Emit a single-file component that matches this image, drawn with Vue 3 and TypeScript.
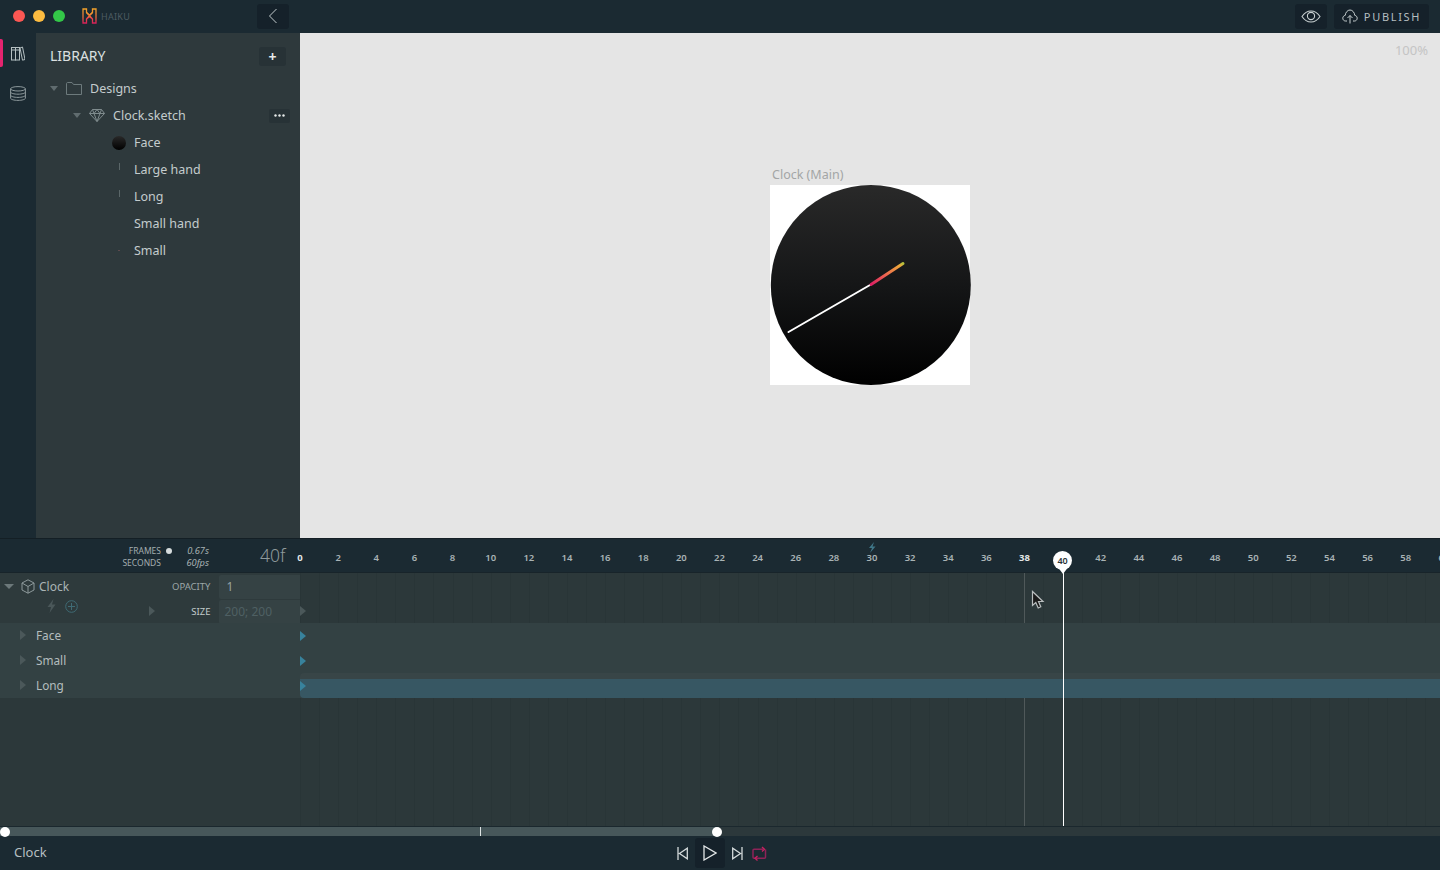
<script setup lang="ts">
const rulerFrames: number[] = []
for (let f = 0; f <= 60; f += 2) rulerFrames.push(f)

const gridLines = Array.from({ length: 60 }, (_, i) => i)

const assets = [
  { name: 'Face', icon: 'face' },
  { name: 'Large hand', icon: 'bar' },
  { name: 'Long', icon: 'bar' },
  { name: 'Small hand', icon: 'none' },
  { name: 'Small', icon: 'dot' }
]

const rows = [
  { name: 'Face', bar: false },
  { name: 'Small', bar: false },
  { name: 'Long', bar: true }
]
</script>

<template>
  <div class="app">
    <header class="topbar">
      <div class="lights">
        <span class="light red"></span>
        <span class="light yellow"></span>
        <span class="light green"></span>
      </div>
      <svg class="logo" width="15" height="16" viewBox="0 0 15 16" fill="none">
        <defs>
          <linearGradient id="lg" x1="0" y1="0" x2="0" y2="1">
            <stop offset="0" stop-color="#f2a32a" />
            <stop offset=".6" stop-color="#ee6a3a" />
            <stop offset="1" stop-color="#d81e5b" />
          </linearGradient>
        </defs>
        <path d="M1 1H4.500V4.500L7.500 7L10.500 4.500V1H14V15H10.500V11L7.500 8.500L4.500 11V15H1Z" stroke="url(#lg)" stroke-width="1.300" />
        <path d="M4.500 4.500L10.500 11M10.500 4.500L4.500 11" stroke="url(#lg)" stroke-width="1.300" />
      </svg>
      <span class="brand">HAIKU</span>
      <button class="back">
        <svg width="10" height="16" viewBox="0 0 10 16" fill="none"><path d="M8.500 1L1.500 8L8.500 15" stroke="#c2cbcd" stroke-width="1" /></svg>
      </button>
      <div class="top-actions">
        <button class="top-btn eye">
          <svg width="20" height="13" viewBox="0 0 20 13" fill="none" stroke="#c9d1d2" stroke-width="1.100">
            <path d="M1 6.500C4 2 7 1 10 1s6 1 9 5.500C16 11 13 12 10 12S4 11 1 6.500Z" />
            <circle cx="10" cy="6" r="3.600" />
          </svg>
        </button>
        <button class="top-btn publish">
          <svg width="16" height="15" viewBox="0 0 16 15" fill="none" stroke="#c9d1d2" stroke-width="1">
            <path d="M5 12H3.500C2 12 .8 10.800 .8 9.200c0-1.500 1-2.600 2.400-2.800C3.500 3.500 5.500 1 8 1s4.500 2.500 4.800 5.400c1.400.2 2.400 1.300 2.400 2.800 0 1.600-1.200 2.800-2.700 2.800H11" />
            <path d="M8 14.500V6.500M5.500 9L8 6.500L10.500 9" />
          </svg>
          <span>PUBLISH</span>
        </button>
      </div>
    </header>

    <div class="main">
      <nav class="rail">
        <div class="rail-item active">
          <svg width="14" height="15" viewBox="0 0 14 15" fill="none" stroke="#b4bfc1" stroke-width="1">
            <rect x=".5" y="1.500" width="4" height="12.500" />
            <rect x="4.500" y="1.500" width="4" height="12.500" />
            <path d="M9 2L11.500 1L14 13.500L11.500 14.200Z" />
            <path d="M.5 4h8" />
          </svg>
        </div>
        <div class="rail-item">
          <svg width="16" height="15" viewBox="0 0 16 15" fill="none" stroke="#8d999c" stroke-width="1">
            <ellipse cx="8" cy="2.800" rx="7.400" ry="2.200" />
            <path d="M.6 2.800V12.200C.6 13.400 4 14.400 8 14.400s7.400-1 7.400-2.200V2.800" />
            <path d="M.6 6C.6 7.200 4 8.200 8 8.200s7.400-1 7.400-2.200M.6 9.200C.6 10.400 4 11.400 8 11.400s7.400-1 7.400-2.200" />
          </svg>
        </div>
      </nav>

      <aside class="library">
        <div class="lib-head">
          <span class="lib-title">LIBRARY</span>
          <button class="add">+</button>
        </div>
        <div class="tree-row level0">
          <span class="caret down"></span>
          <svg class="folder" width="16" height="13" viewBox="0 0 16 13" fill="none" stroke="#6d7a7c" stroke-width="1">
            <path d="M.5 12.500V1.500C.5 1 1 .5 1.500 .5H6L7.500 2.500H15.500V12.500Z" />
          </svg>
          <span>Designs</span>
        </div>
        <div class="tree-row level1">
          <span class="caret down"></span>
          <svg class="gem" width="16" height="13" viewBox="0 0 16 13" fill="none" stroke="#7f8b8d" stroke-width="1">
            <path d="M3.500 .5H12.500L15.500 4.500L8 12.500L.5 4.500ZM.5 4.500H15.500M5 4.500L8 12.500L11 4.500M3.500 .5L5 4.500L8 .5L11 4.500L12.500 .5" />
          </svg>
          <span>Clock.sketch</span>
          <button class="more">
            <svg width="11" height="3" viewBox="0 0 11 3" fill="#e6eaea">
              <circle cx="1.500" cy="1.500" r="1.200" />
              <circle cx="5.500" cy="1.500" r="1.200" />
              <circle cx="9.500" cy="1.500" r="1.200" />
            </svg>
          </button>
        </div>
        <div v-for="a in assets" :key="a.name" class="tree-row level2">
          <span class="thumb">
            <span v-if="a.icon === 'face'" class="thumb-face"></span>
            <span v-else-if="a.icon === 'bar'" class="thumb-bar"></span>
            <span v-else-if="a.icon === 'dot'" class="thumb-dot"></span>
          </span>
          <span>{{ a.name }}</span>
        </div>
      </aside>

      <section class="stage">
        <span class="zoom">100%</span>
        <div class="artboard">
          <div class="art-title">Clock (Main)</div>
          <div class="paper">
            <svg width="200" height="200" viewBox="0 0 200 200">
              <defs>
                <linearGradient id="face" x1="0" y1="0" x2="0" y2="1">
                  <stop offset="0" stop-color="#292929" />
                  <stop offset=".5" stop-color="#151617" />
                  <stop offset="1" stop-color="#000" />
                </linearGradient>
                <linearGradient id="hand" x1="0" y1="1" x2="1" y2="0">
                  <stop offset="0" stop-color="#dc1e62" />
                  <stop offset=".5" stop-color="#ee6b4e" />
                  <stop offset=".9" stop-color="#eda83a" />
                  <stop offset="1" stop-color="#b4c13c" />
                </linearGradient>
              </defs>
              <circle cx="100.800" cy="100" r="100" fill="url(#face)" />
              <path d="M18.500 147L100 100" stroke="#fff" stroke-width="2" stroke-linecap="round" />
              <path d="M101 99.500L133 78.500" stroke="url(#hand)" stroke-width="3" stroke-linecap="round" />
            </svg>
          </div>
        </div>
      </section>
    </div>

    <section class="timeline">
      <div class="ruler">
        <div class="ruler-left">
          <div class="units">
            <span>FRAMES</span>
            <span>SECONDS</span>
          </div>
          <span class="unit-dot"></span>
          <div class="rates">
            <span>0.67s</span>
            <span>60fps</span>
          </div>
          <span class="frame-now">40f</span>
        </div>
        <div class="ticks">
          <span
            v-for="f in rulerFrames"
            :key="f"
            class="tick"
            :class="{ strong: f === 38, zero: f === 0, current: f === 40 }"
          >
            {{ f }}
            <svg v-if="f === 30" class="bolt" width="8" height="11" viewBox="0 0 8 11"><path d="M6 0L1 6H4L2 11L7.500 4.500H4.500Z" fill="#3f7688" /></svg>
          </span>
        </div>
      </div>

      <div class="body">
        <!-- frame grid sits under the rows -->
        <div class="grid-lines">
          <span v-for="g in gridLines" :key="g" class="grid-line"></span>
        </div>

        <div class="group">
          <div class="group-left">
            <div class="group-name">
              <div class="clock-label">
                <span class="caret down big"></span>
                <svg class="cube" width="14" height="15" viewBox="0 0 14 15" fill="none" stroke="#8d999b" stroke-width="1">
                  <path d="M7 .8L13 4V11L7 14.200L1 11V4ZM1 4L7 7.500L13 4M7 7.500V14.200" />
                </svg>
                <span>Clock</span>
              </div>
              <div class="clock-tools">
                <svg width="9" height="14" viewBox="0 0 9 14"><path d="M6.500 0L.5 8H4L2.500 14L8.500 5.500H5Z" fill="#4a5759" /></svg>
                <svg width="13" height="13" viewBox="0 0 13 13" fill="none" stroke="#3f6b75" stroke-width="1">
                  <circle cx="6.500" cy="6.500" r="5.800" />
                  <path d="M6.500 3V10M3 6.500H10" />
                </svg>
                <span class="caret right dim tool-caret"></span>
              </div>
            </div>
            <div class="props">
              <div class="prop">
                <label>OPACITY</label>
                <span class="prop-value">1</span>
              </div>
              <div class="prop">
                <label class="strong">SIZE</label>
                <span class="prop-value faded">200; 200</span>
              </div>
            </div>
          </div>
          <div class="group-track">
            <span class="key-mark dim"></span>
          </div>
        </div>

        <div v-for="r in rows" :key="r.name" class="row">
          <div class="row-left">
            <span class="caret right dim"></span>
            <span>{{ r.name }}</span>
          </div>
          <div class="row-track" :class="{ 'has-bar': r.bar }">
            <div v-if="r.bar" class="bar"></div>
            <span class="key-mark"></span>
          </div>
        </div>

        <div class="rest"></div>

        <span class="marker"></span>
        <svg class="cursor" width="14" height="20" viewBox="0 0 14 20">
          <path d="M1.500 1.500V15.500L4.800 12.500L7.200 18L9.800 16.800L7.500 11.500H12Z" fill="#1a1a1a" stroke="#b9bebf" stroke-width="1.200" />
        </svg>
      </div>

      <div class="scrub">
        <div class="scrub-fill"><span class="scrub-tick"></span></div>
        <span class="scrub-knob left"></span>
        <span class="scrub-knob right"></span>
      </div>

      <footer class="footer">
        <span class="foot-name">Clock</span>
        <div class="transport">
          <svg width="11" height="13" viewBox="0 0 11 13" fill="none" stroke="#d5dbdc" stroke-width="1.300"><path d="M1 0V13M10.300 1.200V11.800L2.500 6.500Z" /></svg>
          <span class="play">
            <svg width="14" height="16" viewBox="0 0 14 16" fill="none" stroke="#e2e6e7" stroke-width="1.300"><path d="M1 1V15L13 8Z" /></svg>
          </span>
          <svg width="11" height="13" viewBox="0 0 11 13" fill="none" stroke="#d5dbdc" stroke-width="1.300"><path d="M10 0V13M.7 1.200V11.800L8.500 6.500Z" /></svg>
          <svg class="loop" width="15" height="15" viewBox="0 0 15 15" fill="none" stroke-width="1.500">
            <path d="M3.500 12.300H2C1.400 12.300 1 11.900 1 11.300V4.300C1 3.700 1.400 3.300 2 3.300H11M13.500 3.500V11.300C13.500 11.900 13.100 12.300 12.500 12.300H4" stroke="#8e2358" />
            <path d="M10 1L12.500 3.300L10 5.500M5.500 10L3 12.300L5.500 14.500" stroke="#c92160" stroke-width="1.300" />
          </svg>
        </div>
      </footer>
    </section>
  </div>
</template>

<style>
html,
body {
  margin: 0;
  background: #1b2a32;
  overflow: hidden;
}
</style>

<style scoped>
.app {
  width: 1440px;
  height: 870px;
  display: flex;
  flex-direction: column;
  font-family: "Noto Sans", "Open Sans", sans-serif;
  color: #cdd4d5;
  background: #1b2a32;
  overflow: hidden;
}

button {
  border: 0;
  padding: 0;
  font: inherit;
  color: inherit;
}

/* top bar */
.topbar {
  height: 33px;
  flex: none;
  display: flex;
  align-items: center;
  padding: 0 0 1px 13px;
  box-sizing: border-box;
}
.lights {
  display: flex;
  gap: 8px;
}
.light {
  width: 12px;
  height: 12px;
  border-radius: 50%;
}
.red { background: #fc5753; }
.yellow { background: #fdbc40; }
.green { background: #33c748; }
.logo {
  margin-left: 17px;
  margin-top: -1px;
}
.brand {
  margin-left: 4px;
  font-size: 9px;
  letter-spacing: .3px;
  color: #4e5c62;
}
.back {
  margin-left: 127px;
  width: 32px;
  height: 25px;
  background: #15212a;
  border-radius: 3px;
  display: flex;
  align-items: center;
  justify-content: center;
}
.top-actions {
  margin-left: auto;
  margin-right: 11px;
  display: flex;
  gap: 7px;
}
.top-btn {
  height: 25px;
  background: #15212a;
  border-radius: 3px;
  display: flex;
  align-items: center;
  justify-content: center;
}
.eye { width: 32px; }
.publish {
  width: 95px;
  gap: 6px;
  font-size: 11px;
  letter-spacing: 1.700px;
  color: #b4bec0;
}

.main {
  flex: none;
  height: 505px;
  display: flex;
}

/* icon rail */
.rail {
  width: 36px;
  flex: none;
  padding-top: 6px;
  display: flex;
  flex-direction: column;
  gap: 12px;
}
.rail-item {
  position: relative;
  height: 28px;
  display: flex;
  align-items: center;
  justify-content: center;
}
.rail-item.active::before {
  content: "";
  position: absolute;
  left: 0;
  top: 0;
  width: 3px;
  height: 28px;
  border-radius: 0 2px 2px 0;
  background: #e5246f;
}

/* library */
.library {
  width: 264px;
  flex: none;
  background: #2e393c;
  box-sizing: border-box;
  padding-right: 10px;
  font-size: 12.500px;
  color: #c4cccd;
}
.lib-head {
  height: 38px;
  padding: 4px 4px 0 14px;
  display: flex;
  align-items: center;
  justify-content: space-between;
}
.lib-title {
  font-size: 14px;
  color: #dbe0e0;
  margin-top: -1px;
}
.add {
  width: 27px;
  height: 19px;
  border-radius: 3px;
  background: #273236;
  color: #e5e9e9;
  font-size: 14px;
  font-weight: 700;
  line-height: 19px;
}
.tree-row {
  height: 27px;
  display: flex;
  align-items: center;
}
.level0 { padding-left: 14px; }
.level1 { padding-left: 37px; }
.level2 { padding-left: 76px; }
.folder { margin: 0 8px 0 8px; }
.gem { margin: 0 8px 0 8px; }
.caret {
  display: inline-block;
  width: 0;
  height: 0;
  flex: none;
}
.caret.down {
  border-left: 4px solid transparent;
  border-right: 4px solid transparent;
  border-top: 5px solid #606c6f;
}
.caret.down.big {
  border-left-width: 5px;
  border-right-width: 5px;
  border-top: 5px solid #6c787a;
}
.caret.right {
  border-top: 5px solid transparent;
  border-bottom: 5px solid transparent;
  border-left: 6px solid #4b585a;
}
.more {
  margin-left: auto;
  width: 21px;
  height: 14px;
  background: #273236;
  border-radius: 2px;
  display: flex;
  align-items: center;
  justify-content: center;
}
.thumb {
  width: 14px;
  height: 14px;
  margin-right: 8px;
  display: flex;
  align-items: center;
  justify-content: center;
}
.thumb-face {
  width: 14px;
  height: 14px;
  border-radius: 50%;
  background: linear-gradient(#292929, #000);
}
.thumb-bar {
  width: 1px;
  height: 7px;
  margin-top: -6px;
  background: #5a6668;
}
.thumb-dot {
  width: 2px;
  height: 1px;
  background: #5d4a4e;
}

/* stage */
.stage {
  flex: 1;
  position: relative;
  background: #e5e5e5;
  display: flex;
  justify-content: center;
  align-items: flex-start;
}
.zoom {
  position: absolute;
  top: 8px;
  right: 12px;
  font-size: 13px;
  color: #c4c4c4;
}
.artboard {
  margin-top: 131px;
  width: 200px;
}
.art-title {
  font-size: 12.500px;
  line-height: 21px;
  padding-left: 2px;
  color: #a3a5a6;
}
.paper {
  width: 200px;
  height: 200px;
  background: #fff;
}
.paper svg {
  display: block;
  overflow: visible;
}

/* timeline */
.timeline {
  flex: 1;
  display: flex;
  flex-direction: column;
  min-height: 0;
}
.ruler {
  height: 35px;
  flex: none;
  display: flex;
  align-items: center;
  box-shadow: inset 0 1px 0 #141f25;
  border-bottom: 1px solid #18242a;
  box-sizing: border-box;
}
.ruler-left {
  width: 281px;
  flex: none;
  display: flex;
  align-items: center;
  padding-left: 129px;
  box-sizing: border-box;
}
.units {
  display: flex;
  flex-direction: column;
  align-items: flex-end;
  flex: none;
  width: 32px;
  margin-top: 4px;
  font-size: 8.500px;
  line-height: 12px;
  color: #a3adaf;
}
.unit-dot {
  flex: none;
  width: 6px;
  height: 6px;
  margin: -9px 0 0 5px;
  border-radius: 50%;
  background: #d6dcdd;
}
.rates {
  margin: 4px 0 0 11px;
  flex: none;
  width: 26px;
  display: flex;
  flex-direction: column;
  align-items: flex-end;
  font-size: 9.300px;
  line-height: 12px;
  font-style: italic;
  color: #a6b0b1;
}
.frame-now {
  margin-left: 51px;
  flex: none;
  font-size: 17.500px;
  color: #8f9a9c;
  font-weight: 300;
}
.ticks {
  flex: none;
  display: flex;
  margin-top: 4px;
}
.tick {
  position: relative;
  flex: 0 0 38.140px;
  text-align: center;
  font-size: 9.500px;
  font-weight: 600;
  color: #a9b3b5;
}
.tick.strong,
.tick.zero { color: #e3e7e7; font-weight: 700; }
.tick.current {
  z-index: 2;
  top: 3px;
  font-size: 9px;
  color: #2b3437;
}
.tick.current::before {
  content: "";
  position: absolute;
  z-index: -1;
  left: 9.500px;
  top: -3px;
  width: 19px;
  height: 19px;
  border-radius: 50%;
  background: #fff;
}
.tick.current::after {
  content: "";
  position: absolute;
  z-index: -1;
  left: 13px;
  top: 12px;
  border-left: 6px solid transparent;
  border-right: 6px solid transparent;
  border-top: 8px solid #fff;
}
.bolt {
  position: absolute;
  left: 15px;
  top: -9px;
}

.body {
  flex: 1;
  position: relative;
  display: flex;
  flex-direction: column;
  min-height: 0;
  background: #2c383a;
}
.group {
  height: 50px;
  flex: none;
  display: flex;
  position: relative;
}
.group-left {
  width: 300px;
  flex: none;
  display: flex;
  background: #2e3a3c;
  box-sizing: border-box;
}
.group-name {
  width: 172px;
  flex: none;
}
.clock-label {
  height: 27px;
  display: flex;
  align-items: center;
  padding-left: 4px;
  gap: 7px;
  font-size: 12px;
  color: #aab4b5;
}
.cube { margin-right: -3px; }
.clock-tools {
  display: flex;
  align-items: center;
  padding-left: 47px;
  gap: 9px;
  margin-top: -4px;
}
.tool-caret {
  margin: 10px 0 0 62px;
}
.props {
  flex: 1;
  display: flex;
  flex-direction: column;
  padding-top: 1px;
}
.prop {
  height: 25px;
  flex: none;
  display: flex;
  align-items: center;
  justify-content: flex-end;
  gap: 9px;
}
.prop label {
  font-size: 9.500px;
  color: #9ca7a8;
}
.prop label.strong { color: #c2cacb; }
.prop-value {
  width: 81px;
  height: 24px;
  box-sizing: border-box;
  padding-left: 7px;
  line-height: 24px;
  background: #354244;
  border-radius: 2px 0 0 2px;
  font-size: 12px;
  color: #98a3a4;
}
.prop-value.faded { padding-left: 5px; color: #4f6063; }
.group-track {
  flex: 1;
  position: relative;
}
.key-mark {
  position: absolute;
  left: 0;
  top: 50%;
  margin-top: -5px;
  width: 0;
  height: 0;
  z-index: 2;
  border-top: 5px solid transparent;
  border-bottom: 5px solid transparent;
  border-left: 6px solid #38829c;
}
.key-mark.dim {
  top: 38px;
  border-left-color: #4b585a;
}
.row {
  height: 25px;
  flex: none;
  display: flex;
  position: relative;
  background: #334143;
}
.row-left {
  width: 300px;
  flex: none;
  display: flex;
  align-items: center;
  padding: 0 0 2px 20px;
  box-sizing: border-box;
  gap: 10px;
  font-size: 11.800px;
  color: #b4bdbe;
}
.row-track {
  flex: 1;
  position: relative;
}
.row-track.has-bar {
  background: #384547;
  border-radius: 4px 0 0 4px;
}
.bar {
  position: absolute;
  left: 0;
  right: 0;
  top: 6px;
  height: 19px;
  background: #375763;
  border-radius: 0 0 0 4px;
}
.rest {
  flex: 1;
}
.grid-lines {
  position: absolute;
  left: 300px;
  top: 0;
  bottom: 0;
  display: flex;
  pointer-events: none;
}
.grid-line {
  flex: 0 0 19.070px;
  box-sizing: border-box;
  border-left: 1px solid rgba(0, 0, 0, .05);
}
.grid-line:nth-child(39) { border-left-color: #50595a; }
.marker {
  position: absolute;
  left: 1063px;
  top: 0;
  bottom: 0;
  width: 1px;
  background: #fff;
}
.row ~ .marker { z-index: 3; }
.cursor {
  position: absolute;
  left: 1031px;
  top: 17px;
  z-index: 3;
}

/* scrub bar */
.scrub {
  height: 10px;
  flex: none;
  position: relative;
  background: #2c383b;
  border-top: 1px solid #1b282e;
  box-sizing: border-box;
}
.scrub-fill {
  position: absolute;
  left: 0;
  top: 0;
  bottom: 0;
  width: 717px;
  background: #47575a;
}
.scrub-tick {
  position: absolute;
  left: 480px;
  top: 0;
  bottom: 0;
  width: 1px;
  background: #dfe4e4;
}
.scrub-knob {
  position: absolute;
  top: 0;
  width: 10px;
  height: 10px;
  border-radius: 50%;
  background: #fff;
}
.scrub-knob.left { left: 0; }
.scrub-knob.right { left: 712px; }

/* footer */
.footer {
  height: 34px;
  flex: none;
  position: relative;
  display: flex;
  align-items: center;
  padding-left: 14px;
  padding-bottom: 2px;
  box-sizing: border-box;
  font-size: 13px;
  color: #b6bfc1;
}
.transport {
  position: absolute;
  left: 677px;
  top: 0;
  height: 34px;
  display: flex;
  align-items: center;
}
.play {
  width: 30px;
  height: 30px;
  margin: 0 7px;
  background: #15212a;
  border-radius: 3px;
  display: flex;
  align-items: center;
  justify-content: center;
}
.loop { margin-left: 9px; }
</style>
